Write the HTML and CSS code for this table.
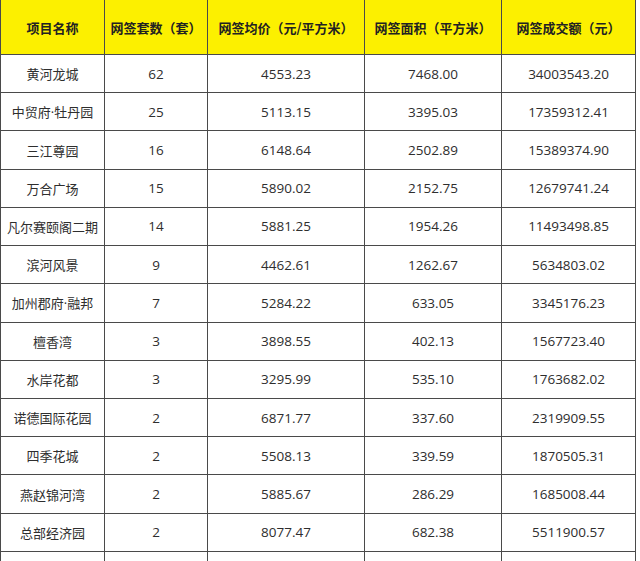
FILE: index.html
```html
<!DOCTYPE html>
<html lang="zh-CN">
<head>
<meta charset="utf-8">
<title>网签数据</title>
<link rel="stylesheet" href="styles.css">
</head>
<body>
<div class="table">
  <div class="cell head first">项目名称</div>
  <div class="cell head">网签套数（套）</div>
  <div class="cell head">网签均价（元/平方米）</div>
  <div class="cell head">网签面积（平方米）</div>
  <div class="cell head">网签成交额（元）</div>

  <div class="cell first">黄河龙城</div><div class="cell num">62</div><div class="cell num">4553.23</div><div class="cell num">7468.00</div><div class="cell num">34003543.20</div>
  <div class="cell first">中贸府·牡丹园</div><div class="cell num">25</div><div class="cell num">5113.15</div><div class="cell num">3395.03</div><div class="cell num">17359312.41</div>
  <div class="cell first">三江尊园</div><div class="cell num">16</div><div class="cell num">6148.64</div><div class="cell num">2502.89</div><div class="cell num">15389374.90</div>
  <div class="cell first">万合广场</div><div class="cell num">15</div><div class="cell num">5890.02</div><div class="cell num">2152.75</div><div class="cell num">12679741.24</div>
  <div class="cell first">凡尔赛颐阁二期</div><div class="cell num">14</div><div class="cell num">5881.25</div><div class="cell num">1954.26</div><div class="cell num">11493498.85</div>
  <div class="cell first">滨河风景</div><div class="cell num">9</div><div class="cell num">4462.61</div><div class="cell num">1262.67</div><div class="cell num">5634803.02</div>
  <div class="cell first">加州郡府·融邦</div><div class="cell num">7</div><div class="cell num">5284.22</div><div class="cell num">633.05</div><div class="cell num">3345176.23</div>
  <div class="cell first">檀香湾</div><div class="cell num">3</div><div class="cell num">3898.55</div><div class="cell num">402.13</div><div class="cell num">1567723.40</div>
  <div class="cell first">水岸花都</div><div class="cell num">3</div><div class="cell num">3295.99</div><div class="cell num">535.10</div><div class="cell num">1763682.02</div>
  <div class="cell first">诺德国际花园</div><div class="cell num">2</div><div class="cell num">6871.77</div><div class="cell num">337.60</div><div class="cell num">2319909.55</div>
  <div class="cell first">四季花城</div><div class="cell num">2</div><div class="cell num">5508.13</div><div class="cell num">339.59</div><div class="cell num">1870505.31</div>
  <div class="cell first">燕赵锦河湾</div><div class="cell num">2</div><div class="cell num">5885.67</div><div class="cell num">286.29</div><div class="cell num">1685008.44</div>
  <div class="cell first">总部经济园</div><div class="cell num">2</div><div class="cell num">8077.47</div><div class="cell num">682.38</div><div class="cell num">5511900.57</div>
  <div class="cell first"></div><div class="cell num"></div><div class="cell num"></div><div class="cell num"></div><div class="cell num"></div>
</div>
</body>
</html>
```
FILE: styles.css
```css
html, body {
  margin: 0;
  padding: 0;
  background: #ffffff;
}

.table {
  display: grid;
  grid-template-columns: 105px 103px 157px 137px 134px;
  grid-template-rows: 55px repeat(14, 38.23px);
  width: 636px;
  font-family: "Open Sans", "Noto Sans CJK SC", sans-serif;
  font-size: 13px;
  color: #2e2e2e;
}

.cell {
  box-sizing: border-box;
  display: flex;
  align-items: center;
  justify-content: center;
  border-right: 1px solid #4a4a4a;
  border-bottom: 1px solid #4a4a4a;
  white-space: nowrap;
  background: #ffffff;
}

.first {
  border-left: 1px solid #4a4a4a;
}

.head {
  background: #fcf000;
  font-family: "Noto Sans CJK SC", sans-serif;
  font-weight: 700;
  color: #222222;
}

.num {
  font-size: 13.5px;
}
```
